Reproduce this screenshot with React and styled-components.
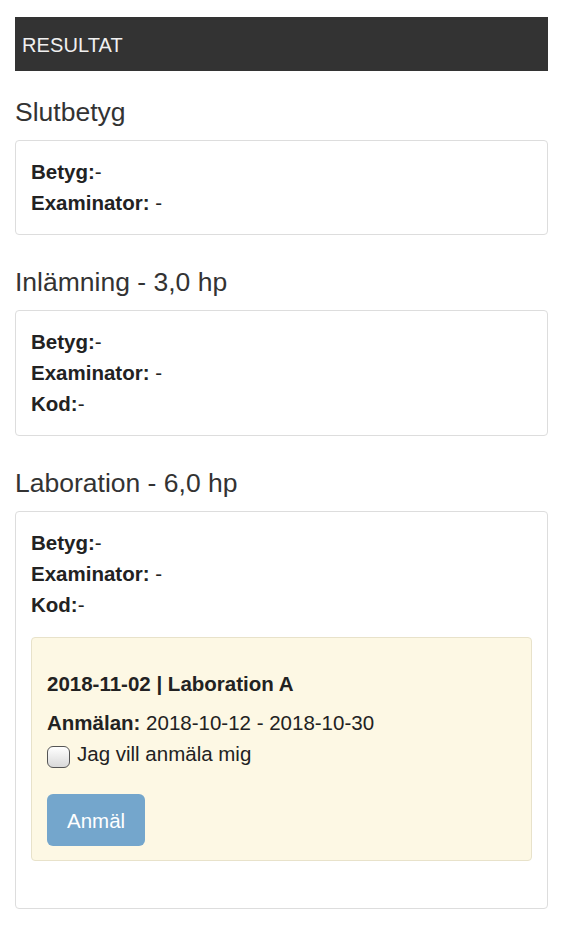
import React from "react";
import styled, { createGlobalStyle } from "styled-components";

const Global = createGlobalStyle`
  html, body { margin: 0; padding: 0; background: #fff; }
  body { font-family: "Liberation Sans", Arial, Helvetica, sans-serif; color: #222; }
  * { box-sizing: border-box; }
`;

const Page = styled.div`
  padding: 17px 15px 20px 15px;
  display: flex;
  flex-direction: column;
`;

const HeaderBar = styled.div`
  height: 54px;
  background: #333333;
  color: #f0f0f0;
  font-size: 20px;
  display: flex;
  align-items: center;
  padding: 2px 0 0 7px;
  letter-spacing: 0.1px;
`;

const Section = styled.section`
  display: flex;
  flex-direction: column;
  margin-top: ${(p) => (p.$first ? "27px" : "0")};
  margin-bottom: ${(p) => (p.$last ? "0" : "33px")};
`;

const Heading = styled.h3`
  margin: 0 0 13px 0;
  font-weight: normal;
  font-size: 26.5px;
  line-height: 29px;
  color: #333;
`;

const Panel = styled.div`
  border: 1px solid #dddddd;
  border-radius: 4px;
  padding: 15px 15px 16px 15px;
  background: #fff;
`;

const Line = styled.div`
  font-size: 20.5px;
  line-height: 31px;
  color: #222;
  white-space: nowrap;
`;

const Label = styled.b`
  font-weight: bold;
`;

const Alert = styled.div`
  margin: 17px 0 31px 0;
  background: #fdf8e4;
  border: 1px solid #e8e2ca;
  border-radius: 4px;
  padding: 15px 15px 14px 15px;
`;

const AlertTitle = styled.div`
  margin: 15px 0 8px 0;
  font-size: 20.5px;
  line-height: 31px;
  font-weight: bold;
  color: #222;
`;

const CheckRow = styled.label`
  display: flex;
  align-items: flex-start;
  font-size: 20.5px;
  line-height: 31px;
  color: #222;
`;

const Check = styled.input.attrs({ type: "checkbox" })`
  appearance: none;
  -webkit-appearance: none;
  width: 23px;
  height: 22px;
  margin: 8px 7px 0 0;
  border: 1.5px solid #555;
  border-radius: 6px;
  background: linear-gradient(#ffffff, #d9d9d9);
  flex: none;
`;

const Button = styled.button`
  margin-top: 25px;
  height: 52px;
  padding: 0 20px;
  border: none;
  border-radius: 6px;
  background: #74a6cc;
  color: #ffffff;
  font-family: inherit;
  font-size: 20.5px;
  line-height: 23px;
  cursor: not-allowed;
`;

const Result = ({ label, value }) => (
  <Line>
    <Label>{label}</Label>
    {value}
  </Line>
);

export default function App() {
  return (
    <>
      <Global />
      <Page>
        <HeaderBar>RESULTAT</HeaderBar>

        <Section $first>
          <Heading>Slutbetyg</Heading>
          <Panel>
            <Result label="Betyg:" value="-" />
            <Result label="Examinator:" value=" -" />
          </Panel>
        </Section>

        <Section>
          <Heading>Inlämning - 3,0 hp</Heading>
          <Panel>
            <Result label="Betyg:" value="-" />
            <Result label="Examinator:" value=" -" />
            <Result label="Kod:" value="-" />
          </Panel>
        </Section>

        <Section $last>
          <Heading>Laboration - 6,0 hp</Heading>
          <Panel>
            <Result label="Betyg:" value="-" />
            <Result label="Examinator:" value=" -" />
            <Result label="Kod:" value="-" />
            <Alert>
              <AlertTitle>2018-11-02 | Laboration A</AlertTitle>
              <Result label="Anmälan:" value=" 2018-10-12 - 2018-10-30" />
              <CheckRow>
                <Check />
                Jag vill anmäla mig
              </CheckRow>
              <Button disabled>Anmäl</Button>
            </Alert>
          </Panel>
        </Section>
      </Page>
    </>
  );
}
